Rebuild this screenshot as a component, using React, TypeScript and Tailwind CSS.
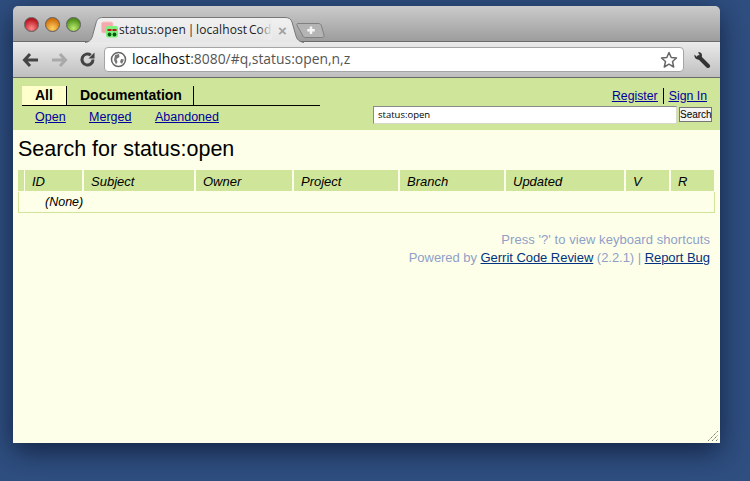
import React from 'react';

const columns = [
  { label: 'ID', width: 'w-[57px]' },
  { label: 'Subject', width: 'w-[110px]' },
  { label: 'Owner', width: 'w-[96px]' },
  { label: 'Project', width: 'w-[104px]' },
  { label: 'Branch', width: 'w-[104px]' },
  { label: 'Updated', width: 'w-[118px]' },
  { label: 'V', width: 'w-[43px]' },
  { label: 'R', width: 'w-[43px]' },
];

const Favicon = () => (
  <svg width="20" height="18" viewBox="0 0 20 18" className="shrink-0">
    <rect x="0.500" y="1" width="11.500" height="11" rx="2" fill="#f4a9ad" stroke="#f7c4c6" />
    <rect x="5" y="5" width="12" height="11.500" rx="2" fill="#7df07d" />
    <rect x="6.500" y="8" width="4" height="2" fill="#c0141c" />
    <rect x="11.500" y="8" width="4" height="2" fill="#c0141c" />
    <circle cx="8.500" cy="13.500" r="1.900" fill="#0b5a12" />
    <circle cx="13.500" cy="13.500" r="1.900" fill="#0b5a12" />
  </svg>
);

const Traffic = ({ from, to }: { from: string; to: string }) => (
  <div
    className="w-[15px] h-[15px] rounded-full border border-[#5e5e5e]"
    style={{ background: `radial-gradient(circle at 50% 80%, ${to}, ${from} 75%)` }}
  />
);

export default function App() {
  return (
    <div className="w-[750px] h-[481px] overflow-hidden bg-[#2f4f80] pl-[13px] pt-[6px] font-['Liberation_Sans',Arial,sans-serif]">
      <div className="relative w-[707px] h-[437px] flex flex-col rounded-t-[5px] overflow-hidden shadow-[0_8px_28px_rgba(10,20,45,0.75)]">
        {/* Title bar */}
        <div className="relative h-[36px] shrink-0 bg-gradient-to-b from-[#cbcbcb] to-[#9d9d9d] border-b border-[#6b6b6b]">
          <div className="flex items-center gap-[6px] pl-[11px] pt-[11px]">
            <Traffic from="#b8141e" to="#ff8a8a" />
            <Traffic from="#d0700c" to="#ffd060" />
            <Traffic from="#4f9018" to="#bcec70" />
          </div>
          {/* tab */}
          <svg width="245" height="26" viewBox="0 0 245 26" className="absolute left-[72px] top-[11px]">
            <defs>
              <linearGradient id="tabFill" x1="0" x2="0" y1="0" y2="1">
                <stop offset="0" stopColor="#f1f1f1" />
                <stop offset="1" stopColor="#e6e6e6" />
              </linearGradient>
            </defs>
            <path d="M0 25.500 C5 25 7 22 8 17 L11 6 C12 2 14 0.500 18 0.500 L200 0.500 C204 0.500 206 2 207 5 L211 19 C212 23 215 25 219 25.500" fill="url(#tabFill)" stroke="#777" />
            <path d="M213 6.500 L233 6.500 C235 6.500 236 7 236.500 9 L239 18 C239.500 20 238 20.500 237 20.500 L221 20.500 C219 20.500 218 20 217.500 18 L212 8.500 C211.500 7 212 6.500 213 6.500 Z" fill="#b4b4b4" stroke="#808080" />
            <path d="M226 9.500 V17 M222.250 13.250 H229.750" stroke="#f6f6f6" strokeWidth="2.500" />
          </svg>
          <div className="absolute left-[88px] top-[14px] w-[195px] h-[20px] flex items-center">
            <Favicon />
            <div className="relative ml-[-2px] w-[153px] overflow-hidden">
              <span className="block text-[12px] leading-[20px] tracking-[0.1px] [word-spacing:-1.500px] text-[#1c1c1c] whitespace-nowrap font-['Open_Sans',sans-serif]">
                status:open | localhost Code
              </span>
              <div className="absolute right-0 top-0 w-[14px] h-full bg-gradient-to-r from-transparent to-[#ececec]" />
            </div>
            <span className="ml-[6px] text-[#a0a0a0] text-[15px] font-bold leading-none">×</span>
          </div>
        </div>

        {/* Toolbar */}
        <div className="h-[36px] shrink-0 flex items-center bg-gradient-to-b from-[#ebebeb] to-[#bfbfbf] border-b border-[#6b6b6b]">
          <svg width="18" height="16" viewBox="0 0 18 16" className="ml-[9px]">
            <path d="M8 2 L2.500 8 L8 14 M3 8 H16" fill="none" stroke="#444" strokeWidth="3" />
          </svg>
          <svg width="18" height="16" viewBox="0 0 18 16" className="ml-[10px]">
            <path d="M10 2 L15.500 8 L10 14 M15 8 H2" fill="none" stroke="#a9a9a9" strokeWidth="3" />
          </svg>
          <svg width="17" height="17" viewBox="0 0 17 17" className="ml-[11px]">
            <path d="M14 8.500 A5.500 5.500 0 1 1 11.800 4.100" fill="none" stroke="#444" strokeWidth="3" />
            <path d="M9.500 7.500 L15.500 7.500 L15.500 1.500 Z" fill="#444" />
          </svg>
          <div className="ml-[8px] w-[580px] h-[25px] flex items-center bg-white border border-[#a5a5a5] rounded-[4px]">
            <svg width="17" height="17" viewBox="0 0 17 17" className="ml-[5px] shrink-0">
              <circle cx="8.500" cy="8.500" r="7" fill="#fff" stroke="#666" strokeWidth="1.500" />
              <path d="M5 4 L9 3 L9.500 6 L6.500 8 L7.500 11 L6 13.500 L4 9 Z M11 8 L14 8.500 L12 13 L10 11 Z" fill="#777" />
            </svg>
            <span className="ml-[5px] text-[13.900px] text-[#555] whitespace-nowrap font-['Open_Sans',sans-serif]">
              <span className="text-[#111]">localhost</span>:8080/#q,status:open,n,z
            </span>
            <svg width="18" height="18" viewBox="0 0 18 18" className="ml-auto mr-[5px] shrink-0">
              <path d="M9 1.500 L11.200 6.500 L16.500 7 L12.500 10.500 L13.700 16 L9 13.200 L4.300 16 L5.500 10.500 L1.500 7 L6.800 6.500 Z" fill="#fff" stroke="#666" strokeWidth="1.500" strokeLinejoin="round" />
            </svg>
          </div>
          <svg width="18" height="17" viewBox="0 0 18 17" className="ml-[9px]">
            <path d="M6 6 L15 15" stroke="#333" strokeWidth="4" strokeLinecap="round" />
            <path d="M1.500 3.500 L4 6 L7 4.500 L5 1.500 C8 0.500 10 3.500 8.500 6.500 L6.500 8.500 C3.500 9 1 7 1.500 3.500 Z" fill="#333" />
          </svg>
        </div>

        {/* Page */}
        <div className="relative flex-1 bg-[#feffe9]">
          {/* Header band */}
          <div className="h-[52px] bg-[#cee59a] flex justify-between pl-[9px] pr-[8px] pt-[8px]">
            <div className="w-[298px]">
              <div className="flex h-[20px] border-b border-black text-[14px] font-bold text-black leading-[18px]">
                <div className="w-[45px] pl-[13px] bg-[#ffffcc] border-r border-black">All</div>
                <div className="w-[127px] pl-[13px] border-r border-black">Documentation</div>
              </div>
              <div className="flex gap-[23.500px] pl-[13px] pt-[4px] text-[12.500px] leading-[15px] text-[#00009c] underline">
                <a>Open</a>
                <a>Merged</a>
                <a>Abandoned</a>
              </div>
            </div>
            <div className="w-[339px] flex flex-col items-end">
              <div className="flex items-center h-[20px] text-[12.300px] text-[#00009c] underline pr-[5px]">
                <a>Register</a>
                <span className="w-px h-[16px] bg-black mx-[5px]" />
                <a>Sign In</a>
              </div>
              <div className="flex items-start gap-[2px] w-full">
                <div className="w-[304px] h-[18px] bg-white border border-[#8a8a8a] border-b-[#d8d8c8] border-r-[#d8d8c8] pl-[4px] text-[9.500px] leading-[16px] text-black font-['Open_Sans',sans-serif]">
                  status:open
                </div>
                <button className="w-[33px] h-[15px] mt-[1px] bg-[#f4f4f4] border border-[#777] text-[10px] leading-[12px] text-black">
                  Search
                </button>
              </div>
            </div>
          </div>

          <h1 className="pl-[5px] pt-[7px] h-[40px] text-[21.500px] leading-[25px] font-normal text-black">Search for status:open</h1>

          {/* Change table */}
          <div className="pl-[5px] w-[702px]">
            <div className="flex gap-[2px] h-[21px] text-[13px] italic text-black leading-[23px]">
              <div className="w-[6px] mr-[-1px] bg-[#cee59a]" />
              {columns.map((c) => (
                <div key={c.label} className={`${c.width} pl-[7px] bg-[#cee59a] shrink-0`}>
                  {c.label}
                </div>
              ))}
            </div>
            <div className="mt-px h-[21px] border-l border-r border-b border-[#cee59a] pl-[26px] text-[12.500px] italic leading-[21px] text-black">
              (None)
            </div>
          </div>

          {/* Footer */}
          <div className="mt-[18px] pr-[10px] text-right text-[13px] leading-[18px] text-[#8f9fc8]">
            <div className="tracking-[0.06px]">Press '?' to view keyboard shortcuts</div>
            <div className="tracking-[-0.04px]">
              Powered by <a className="text-[#00337f] underline">Gerrit Code Review</a> (2.2.1) |{' '}
              <a className="text-[#00337f] underline">Report Bug</a>
            </div>
          </div>

          {/* resize grip */}
          <svg width="12" height="12" viewBox="0 0 12 12" className="absolute right-[1px] bottom-[1px]">
            <path d="M1 11 L11 1 M5 11 L11 5 M9 11 L11 9" stroke="#777" strokeWidth="1" strokeDasharray="1.400 0.700" />
          </svg>
        </div>
      </div>
    </div>
  );
}
